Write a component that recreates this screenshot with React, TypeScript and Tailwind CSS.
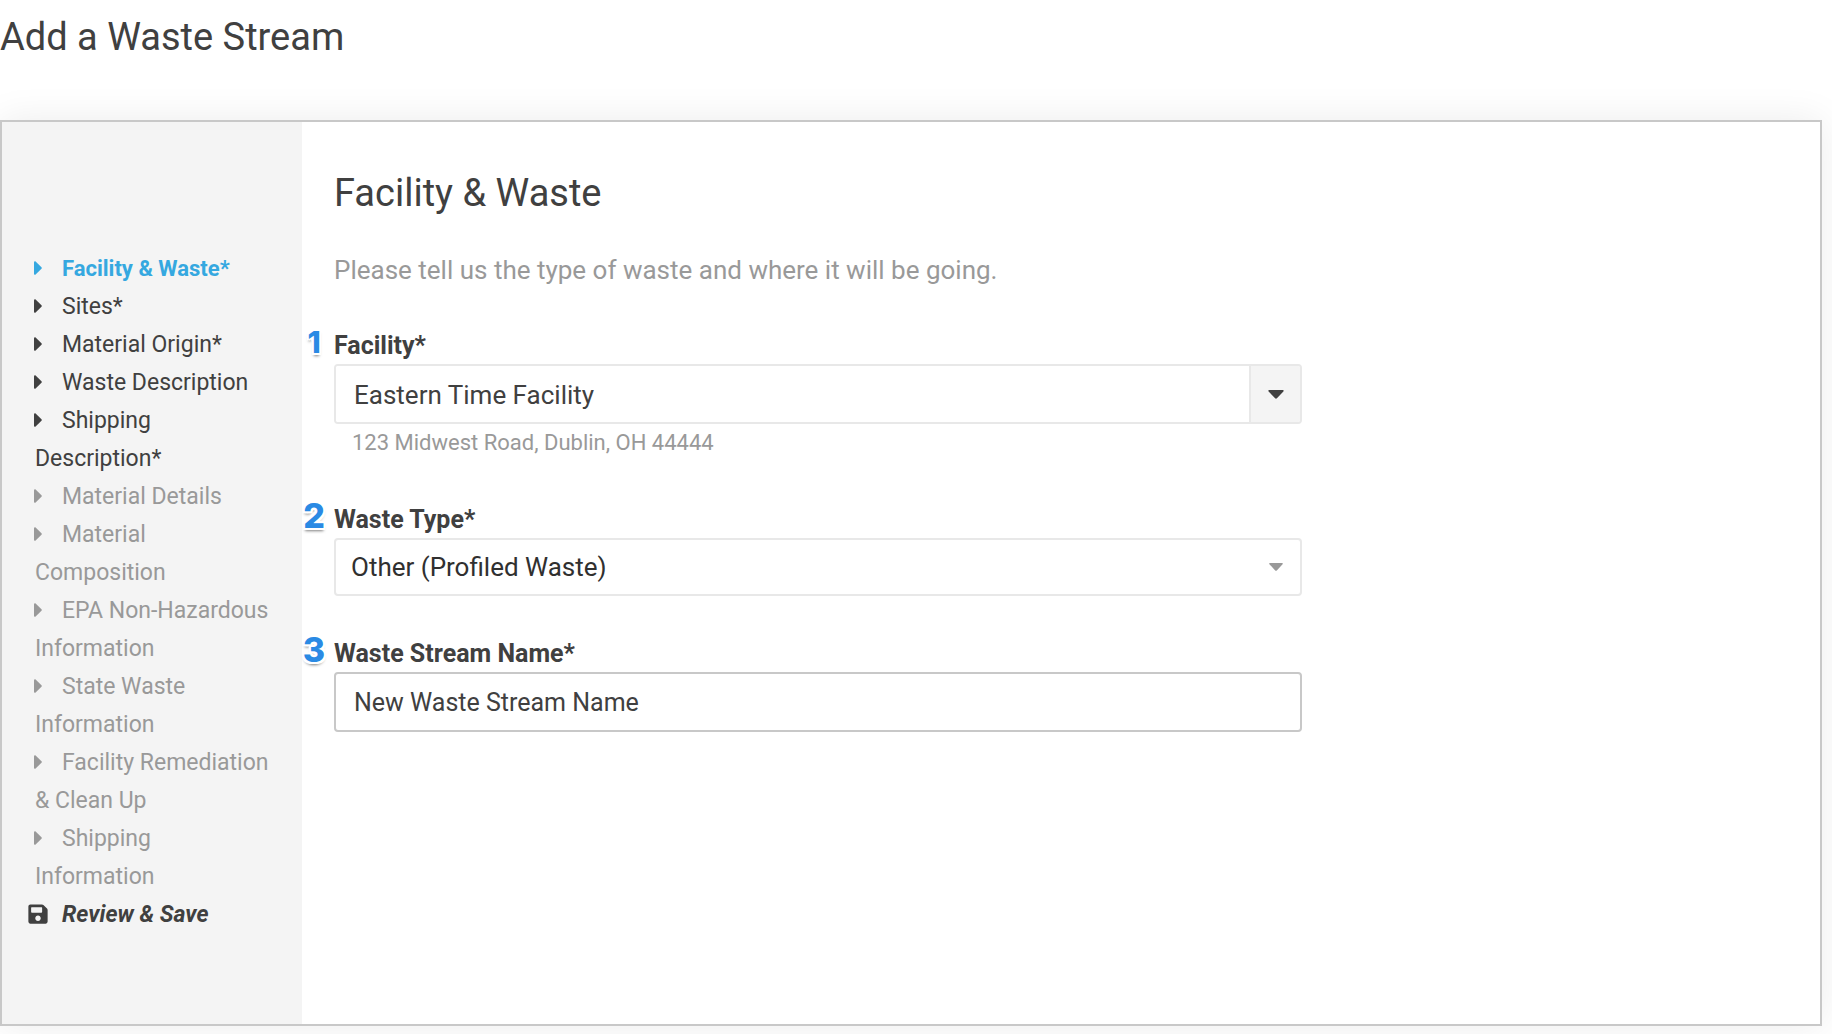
import { useState } from "react";
import type { ReactNode } from "react";
import { FaSave } from "react-icons/fa";

type StepStatus = "active" | "open" | "locked";

interface Step {
  label: string;
  status: StepStatus;
}

const STEPS: Step[] = [
  { label: "Facility & Waste*", status: "active" },
  { label: "Sites*", status: "open" },
  { label: "Material Origin*", status: "open" },
  { label: "Waste Description", status: "open" },
  { label: "Shipping Description*", status: "open" },
  { label: "Material Details", status: "locked" },
  { label: "Material Composition", status: "locked" },
  { label: "EPA Non-Hazardous Information", status: "locked" },
  { label: "State Waste Information", status: "locked" },
  { label: "Facility Remediation & Clean Up", status: "locked" },
  { label: "Shipping Information", status: "locked" },
];

const STATUS_CLASS: Record<StepStatus, string> = {
  active: "text-[22px] font-bold text-[#35a8e0]",
  open: "text-[23px] text-[#404040]",
  locked: "text-[23px] text-[#999999]",
};

function CaretRight() {
  return (
    <svg viewBox="0 0 8 14" className="inline-block h-3.5 w-2 align-[1px]" fill="currentColor" aria-hidden="true">
      <path d="M0 1.2C0 .3 1 0 1.6.5L7.5 6.3c.4.4.4 1 0 1.4L1.6 13.5C1 14 0 13.7 0 12.8z" />
    </svg>
  );
}

function CaretDown({ className }: { className: string }) {
  return (
    <svg viewBox="0 0 16 9" className={className} fill="currentColor" aria-hidden="true">
      <path d="M1.2 0h13.6c.9 0 1.2.8.6 1.4L8.9 8.3c-.5.5-1.3.5-1.8 0L.6 1.4C0 .8.3 0 1.2 0z" />
    </svg>
  );
}

/** Left navigation with every step of the wizard. */
function StepNav() {
  return (
    <nav className="w-[300px] shrink-0 bg-[#f4f4f4] pt-32 pr-7 pb-[90px] pl-[33px]">
      <ul>
        {STEPS.map((step) => (
          <li key={step.label}>
            <a href="#" className={`block leading-[38px] ${STATUS_CLASS[step.status]}`}>
              <span className="mr-3.5 -ml-[7px] inline-block w-5 text-center">
                <CaretRight />
              </span>
              {step.label}
            </a>
          </li>
        ))}
        <li>
          <a href="#" className="block text-[23px] leading-[38px] font-bold text-[#404040] italic">
            <span className="mr-3.5 -ml-[7px] inline-block w-5 text-center">
              <FaSave className="inline-block h-[22px] w-5 align-[-3px]" />
            </span>
            Review &amp; Save
          </a>
        </li>
      </ul>
    </nav>
  );
}

interface FieldProps {
  id: string;
  label: string;
  marker: ReactNode;
  className: string;
  children: ReactNode;
}

function Field({ id, label, marker, className, children }: FieldProps) {
  return (
    <div className={`relative ${className}`}>
      {marker}
      <label htmlFor={id} className="mb-0.5 block text-[25px] leading-8 font-bold text-[#404040]">
        {label}
      </label>
      {children}
    </div>
  );
}

// numbered callout that hangs in the gutter left of a label
function Marker({ n, className }: { n: number; className: string }) {
  return (
    <span
      className={`absolute -top-2 -left-8 w-6 text-center font-['Inter',sans-serif] leading-10 font-extrabold text-[#2a8ae4] [text-shadow:2px_0_0_#fff,-2px_0_0_#fff,0_2px_0_#fff,0_-2px_0_#fff,2px_2px_0_#fff,-2px_2px_0_#fff,2px_-2px_0_#fff,-2px_-2px_0_#fff,0_3px_3px_rgba(0,0,0,0.5)] ${className}`}
    >
      {n}
    </span>
  );
}

export default function App() {
  const [facility, setFacility] = useState("Eastern Time Facility");
  const [wasteType, setWasteType] = useState("Other (Profiled Waste)");
  const [streamName, setStreamName] = useState("New Waste Stream Name");

  return (
    <div className="bg-white pr-2.5 pb-2 font-['Roboto',sans-serif] text-[#404040]">
      <h1 className="pt-3.5 pb-15 text-[38px] leading-[46px]">Add a Waste Stream</h1>

      <div className="flex border-2 border-[#c8c8c8] bg-white shadow-[0_0_36px_rgba(0,0,0,0.08)]">
        <StepNav />

        <main className="min-w-0 flex-1 pt-12 pr-[34px] pl-8">
          <h2 className="text-[38px] leading-[46px]">Facility &amp; Waste</h2>
          <p className="mt-[34px] text-[26px] leading-10 text-[#999999]">
            Please tell us the type of waste and where it will be going.
          </p>

          <form className="w-2/3" onSubmit={(e) => e.preventDefault()}>
            <Field
              id="facility"
              label="Facility*"
              marker={<Marker n={1} className="text-[30px]" />}
              className="mt-10"
            >
              <div className="flex h-15 overflow-hidden rounded-[4px] border-2 border-[#e8e8e8]">
                <input
                  id="facility"
                  type="text"
                  value={facility}
                  onChange={(e) => setFacility(e.target.value)}
                  className="min-w-0 flex-1 bg-white pt-0.5 pl-[18px] text-[26px] outline-none"
                />
                <button
                  type="button"
                  aria-label="Show facilities"
                  className="flex w-[51px] items-center justify-center border-l-2 border-[#e8e8e8] bg-[#f4f4f4]"
                >
                  <CaretDown className="h-[9px] w-4" />
                </button>
              </div>
              <p className="mt-[3px] pl-[18px] text-[22px] leading-8 text-[#999999]">
                123 Midwest Road, Dublin, OH 44444
              </p>
            </Field>

            <Field
              id="waste-type"
              label="Waste Type*"
              marker={<Marker n={2} className="text-[34px]" />}
              className="mt-[45px]"
            >
              <div className="relative">
                <select
                  id="waste-type"
                  value={wasteType}
                  onChange={(e) => setWasteType(e.target.value)}
                  className="block h-[58px] w-full appearance-none rounded-[4px] border-2 border-[#e8e8e8] bg-white pr-12 pl-[15px] text-[26px] text-[#303030] outline-none"
                >
                  <option>Other (Profiled Waste)</option>
                </select>
                <CaretDown className="pointer-events-none absolute top-[25px] right-[18px] h-2 w-4 text-[#999999]" />
              </div>
            </Field>

            <Field
              id="stream-name"
              label="Waste Stream Name*"
              marker={<Marker n={3} className="text-[34px]" />}
              className="mt-[42px]"
            >
              <input
                id="stream-name"
                type="text"
                value={streamName}
                onChange={(e) => setStreamName(e.target.value)}
                className="block h-15 w-full rounded-[4px] border-2 border-[#c8c8c8] bg-white px-[18px] text-[25px] outline-none"
              />
            </Field>
          </form>
        </main>
      </div>
    </div>
  );
}
